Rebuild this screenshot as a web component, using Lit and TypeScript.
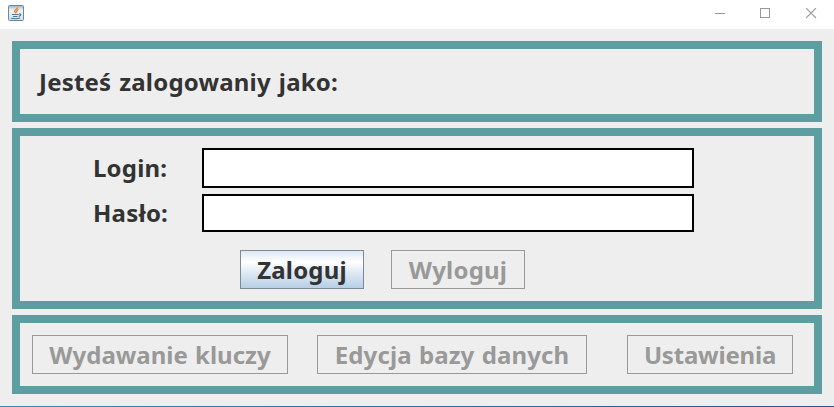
import { LitElement, html, css } from "lit";
import { customElement } from "lit/decorators.js";

@customElement("app-root")
export class AppRoot extends LitElement {
  static styles = css`
    :host {
      display: flex;
      flex-direction: column;
      box-sizing: border-box;
      height: 407px;
      background: #eeeeee;
      color: #333333;
      font: 700 24px/28px "Noto Sans", "DejaVu Sans", sans-serif;
      letter-spacing: 0.2px;
      white-space: nowrap;
      overflow: hidden;
    }
    * { box-sizing: border-box; }
    svg { display: block; }
    .titlebar {
      flex: none;
      display: flex;
      justify-content: space-between;
      height: 29px;
      padding: 5px 17px 0 8px;
      background: #ffffff;
    }
    .controls {
      display: flex;
      gap: 34px;
      padding-top: 3px;
    }
    .content {
      flex: 1;
      display: flex;
      flex-direction: column;
      gap: 6px;
      padding: 12px 12px 0;
    }
    .panel { border: 8px solid #5f9ea0; }
    .status { height: 81px; padding: 19px 0 0 19px; letter-spacing: 0.2px; word-spacing: 1.5px; }
    .login { height: 181px; padding: 12px 0 0 73px; }
    .menu { height: 79px; padding: 12px 0 0 12px; display: flex; }
    .form {
      display: grid;
      grid-template-columns: 109px 492px;
      grid-template-rows: 40px 38px;
      row-gap: 6px;
      align-items: center;
    }
    .field {
      width: 100%;
      height: 100%;
      margin: 0;
      padding: 0 4px;
      border: 2px solid #000;
      border-radius: 0;
      outline: none;
      background: #fff;
      font: inherit;
    }
    .actions { display: flex; gap: 27px; padding: 18px 0 0 147px; }
    .btn {
      flex: none;
      height: 39px;
      margin: 0;
      padding: 1px 0 0;
      border: 1px solid #999999;
      border-radius: 0;
      background: none;
      color: #999999;
      font: inherit;
      letter-spacing: inherit;
      text-align: center;
    }
    .primary {
      border-color: #7a8a99;
      color: #333333;
      background: linear-gradient(#dde8f3 0%, #ffffff 30%, #dde8f3 60%, #b8cfe5 100%);
    }
    .sign-in { width: 124px; }
    .sign-out { width: 134px; }
    .keys { width: 256px; margin-right: 29px; letter-spacing: 0; word-spacing: 1px; }
    .database { width: 270px; margin-right: 40px; letter-spacing: 0.1px; word-spacing: 1px; }
    .settings { width: 166px; letter-spacing: -0.2px; }
    .edge { flex: none; height: 1px; background: linear-gradient(90deg, #2a8db8, #2c5290); }
  `;

  render() {
    return html`
      <div class="titlebar">
        <svg width="16" height="16" viewBox="0 0 16 16">
          <defs>
            <linearGradient id="tile" x1="0" y1="0" x2="0" y2="1">
              <stop offset="0" stop-color="#9aafc0" /><stop offset="0.3" stop-color="#f0f3f6" />
              <stop offset="1" stop-color="#d5dfe8" />
            </linearGradient>
          </defs>
          <rect x="0.5" y="0.5" width="15" height="15" rx="1" fill="url(#tile)" stroke="#6e8699" />
          <path d="M9.500 2.500C10 4 6 4.500 6.500 6.500L8 8M10.500 4.500Q8 5.500 8.800 7.500" fill="none" stroke="#ee7f20" stroke-width="1.300" />
          <path d="M4 9.500H10.500M5 11.500H9.500M11 9Q13.500 8.500 12.500 10.300L10.800 11.500M3 13.300Q8 14.300 12 13" fill="none" stroke="#4d7896" stroke-width="1.100" />
        </svg>
        <div class="controls">
          <svg width="11" height="11"><path d="M0 5.500H10" stroke="#999" /></svg>
          <svg width="12" height="11"><rect x="0.5" y="0.5" width="9" height="9" fill="none" stroke="#999" /></svg>
          <svg width="11" height="11"><path d="M0 0L10 10M10 0L0 10" stroke="#999" stroke-width="1.100" /></svg>
        </div>
      </div>
      <div class="content">
        <div class="panel status"><span>Jesteś zalogowaniy jako:</span></div>
        <div class="panel login">
          <div class="form">
            <label for="login">Login:</label><input class="field" id="login" />
            <label for="password">Hasło:</label><input class="field" id="password" type="password" />
          </div>
          <div class="actions">
            <button class="btn primary sign-in">Zaloguj</button>
            <button class="btn sign-out" disabled>Wyloguj</button>
          </div>
        </div>
        <div class="panel menu">
          <button class="btn keys" disabled>Wydawanie kluczy</button>
          <button class="btn database" disabled>Edycja bazy danych</button>
          <button class="btn settings" disabled>Ustawienia</button>
        </div>
      </div>
      <div class="edge"></div>
    `;
  }
}
